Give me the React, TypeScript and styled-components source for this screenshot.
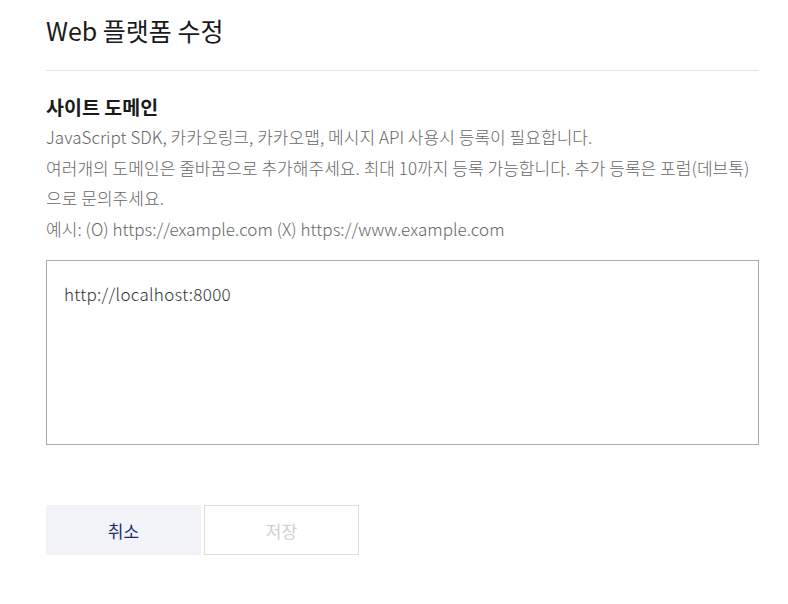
import React from 'react';
import styled, {createGlobalStyle} from "styled-components";

const GlobalStyle = createGlobalStyle`
  body {
    margin: 0;
    background: #ffffff;
    font-family: "Noto Sans CJK KR", "Noto Sans", sans-serif;
  }
`

export default function App() {
    return (
        <>
            <GlobalStyle/>
            <Page>
                <Title>Web 플랫폼 수정</Title>
                <Divider/>
                <Section>
                    <SectionTitle>사이트 도메인</SectionTitle>
                    <Description>
                        JavaScript SDK, 카카오링크, 카카오맵, 메시지 API 사용시 등록이 필요합니다.<br/>
                        여러개의 도메인은 줄바꿈으로 추가해주세요. 최대 10까지 등록 가능합니다. 추가 등록은 포럼(데브톡)으로 문의주세요.<br/>
                        예시: (O) https://example.com (X) https://www.example.com
                    </Description>
                    <DomainInput defaultValue={"http://localhost:8000"}/>
                </Section>
                <Buttons>
                    <Button type="button">취소</Button>
                    <Button type="button" $primary disabled>저장</Button>
                </Buttons>
            </Page>
        </>
    );
}

const Page = styled.div`
  width: 713px;
  padding: 11px 0 0 46px;
`

const Title = styled.h2`
  margin: 0;
  font-size: 25px;
  font-weight: 400;
  line-height: 38px;
  color: #1a1a1a;
`

const Divider = styled.hr`
  margin: 21px 0 0;
  border: 0;
  border-top: 1px solid #e5e5e5;
`

const Section = styled.div`
  padding-top: 21px;
`

const SectionTitle = styled.h3`
  margin: 0;
  font-size: 19.5px;
  font-weight: 700;
  line-height: 29px;
  color: #1a1a1a;
`

const Description = styled.p`
  margin: 1px 0 0;
  font-size: 17px;
  font-weight: 300;
  line-height: 30.5px;
  color: #666666;
  letter-spacing: 0.05px;
`

const DomainInput = styled.textarea`
  display: block;
  box-sizing: border-box;
  width: 713px;
  height: 185px;
  margin-top: 16px;
  padding: 21px 17px;
  border: 1px solid #aaaaaa;
  border-radius: 0;
  resize: none;
  outline: none;
  font-family: inherit;
  font-size: 17px;
  font-weight: 300;
  line-height: 24px;
  color: #333333;
  letter-spacing: 0.3px;
`

const Buttons = styled.div`
  display: flex;
  gap: 3px;
  margin-top: 60px;
`

const Button = styled.button<{ $primary?: boolean }>`
  box-sizing: border-box;
  width: 155px;
  height: 50px;
  border: 1px solid ${props => props.$primary ? "#dcdcdc" : "#f2f3f9"};
  background: ${props => props.$primary ? "#ffffff" : "#f2f3f9"};
  color: ${props => props.$primary ? "#d0d0d0" : "#1b2a6b"};
  font-family: inherit;
  font-size: 17px;
  font-weight: 400;
  cursor: pointer;
`
